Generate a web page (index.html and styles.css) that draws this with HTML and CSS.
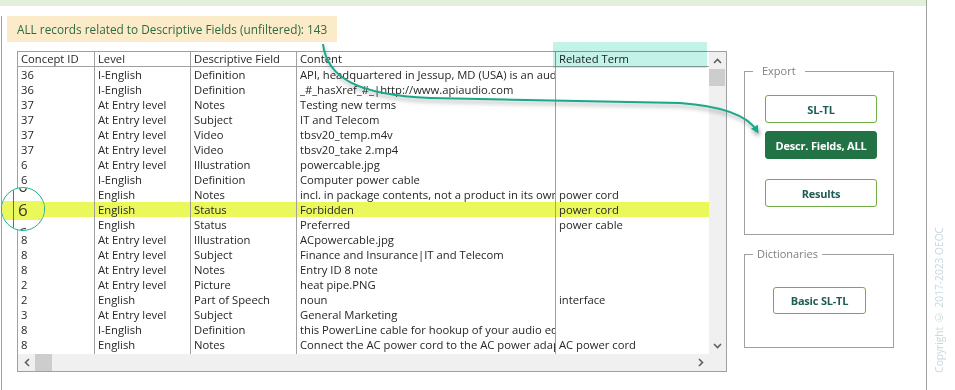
FILE: index.html
```html
<!DOCTYPE html>
<html>
<head>
<meta charset="UTF-8">
<title>Export</title>
<link rel="stylesheet" href="styles.css">
</head>
<body>
    <div id="screen">
        <div id="window">
            <div id="topbar"></div>
            <div id="form">
                <div id="banner">ALL records related to Descriptive Fields (unfiltered): 143</div>
                <div id="workarea">
                    <div id="listbox">
                        <div id="grid">
                            <div class="row head">
                                <div class="cell">Concept ID</div>
                                <div class="cell">Level</div>
                                <div class="cell">Descriptive Field</div>
                                <div class="cell">Content</div>
                                <div class="cell">Related Term</div>
                            </div>
                            <div class="row"><div class="cell">36</div><div class="cell">I-English</div><div class="cell">Definition</div><div class="cell">API, headquartered in Jessup, MD (USA) is an audio company</div><div class="cell"></div></div>
                            <div class="row"><div class="cell">36</div><div class="cell">I-English</div><div class="cell">Definition</div><div class="cell">_#_hasXref_#_|http://www.apiaudio.com</div><div class="cell"></div></div>
                            <div class="row"><div class="cell">37</div><div class="cell">At Entry level</div><div class="cell">Notes</div><div class="cell">Testing new terms</div><div class="cell"></div></div>
                            <div class="row"><div class="cell">37</div><div class="cell">At Entry level</div><div class="cell">Subject</div><div class="cell">IT and Telecom</div><div class="cell"></div></div>
                            <div class="row"><div class="cell">37</div><div class="cell">At Entry level</div><div class="cell">Video</div><div class="cell">tbsv20_temp.m4v</div><div class="cell"></div></div>
                            <div class="row"><div class="cell">37</div><div class="cell">At Entry level</div><div class="cell">Video</div><div class="cell">tbsv20_take 2.mp4</div><div class="cell"></div></div>
                            <div class="row"><div class="cell">6</div><div class="cell">At Entry level</div><div class="cell">Illustration</div><div class="cell">powercable.jpg</div><div class="cell"></div></div>
                            <div class="row"><div class="cell">6</div><div class="cell">I-English</div><div class="cell">Definition</div><div class="cell">Computer power cable</div><div class="cell"></div></div>
                            <div class="row"><div class="cell">6</div><div class="cell">English</div><div class="cell">Notes</div><div class="cell">incl. in package contents, not a product in its own right</div><div class="cell">power cord</div></div>
                            <div class="row selected"><div class="cell">6</div><div class="cell">English</div><div class="cell">Status</div><div class="cell">Forbidden</div><div class="cell">power cord</div></div>
                            <div class="row"><div class="cell">6</div><div class="cell">English</div><div class="cell">Status</div><div class="cell">Preferred</div><div class="cell">power cable</div></div>
                            <div class="row"><div class="cell">8</div><div class="cell">At Entry level</div><div class="cell">Illustration</div><div class="cell">ACpowercable.jpg</div><div class="cell"></div></div>
                            <div class="row"><div class="cell">8</div><div class="cell">At Entry level</div><div class="cell">Subject</div><div class="cell">Finance and Insurance|IT and Telecom</div><div class="cell"></div></div>
                            <div class="row"><div class="cell">8</div><div class="cell">At Entry level</div><div class="cell">Notes</div><div class="cell">Entry ID 8 note</div><div class="cell"></div></div>
                            <div class="row"><div class="cell">2</div><div class="cell">At Entry level</div><div class="cell">Picture</div><div class="cell">heat pipe.PNG</div><div class="cell"></div></div>
                            <div class="row"><div class="cell">2</div><div class="cell">English</div><div class="cell">Part of Speech</div><div class="cell">noun</div><div class="cell">interface</div></div>
                            <div class="row"><div class="cell">3</div><div class="cell">At Entry level</div><div class="cell">Subject</div><div class="cell">General Marketing</div><div class="cell"></div></div>
                            <div class="row"><div class="cell">8</div><div class="cell">I-English</div><div class="cell">Definition</div><div class="cell">this PowerLine cable for hookup of your audio equipment</div><div class="cell"></div></div>
                            <div class="row"><div class="cell">8</div><div class="cell">English</div><div class="cell">Notes</div><div class="cell">Connect the AC power cord to the AC power adapter</div><div class="cell">AC power cord</div></div>
                            <div class="row filler"><div class="cell"></div><div class="cell"></div><div class="cell"></div><div class="cell"></div><div class="cell"></div></div>
                        </div>
                        <div id="vscroll">
                            <div class="sbtn"><svg width="9" height="6" viewBox="0 0 9 6"><polyline points="1,5 4.5,1.5 8,5" fill="none" stroke="#606060" stroke-width="1.6"/></svg></div>
                            <div class="vthumb"></div>
                            <div class="spacer"></div>
                            <div class="sbtn"><svg width="9" height="6" viewBox="0 0 9 6"><polyline points="1,1 4.5,4.5 8,1" fill="none" stroke="#606060" stroke-width="1.6"/></svg></div>
                        </div>
                        <div id="hscroll">
                            <div class="sbtn"><svg width="6" height="9" viewBox="0 0 6 9"><polyline points="5,1 1.5,4.5 5,8" fill="none" stroke="#606060" stroke-width="1.6"/></svg></div>
                            <div class="hthumb"></div>
                            <div class="spacer"></div>
                            <div class="sbtn"><svg width="6" height="9" viewBox="0 0 6 9"><polyline points="1,1 4.5,4.5 1,8" fill="none" stroke="#606060" stroke-width="1.6"/></svg></div>
                        </div>
                        <div id="corner"></div>
                    </div>
                    <div id="side">
                        <fieldset id="export">
                            <legend>Export</legend>
                            <div class="buttons">
                                <button class="btn">SL-TL</button>
                                <button class="btn active">Descr. Fields, ALL</button>
                                <button class="btn results">Results</button>
                            </div>
                        </fieldset>
                        <fieldset id="dictionaries">
                            <legend>Dictionaries</legend>
                            <div class="buttons">
                                <button class="btn small">Basic SL-TL</button>
                            </div>
                        </fieldset>
                    </div>
                </div>
            </div>
        </div>
        <div id="copyright"><span>Copyright © 2017-2023 OEOC</span></div>
    </div>

    <!-- annotations drawn over the screenshot -->
    <div id="col-mark"></div>
    <div id="magnifier">
        <div class="mag-band"></div>
        <div class="mag-line"></div>
        <span class="mag-six top">6</span>
        <span class="mag-six">6</span>
        <span class="mag-six bottom">6</span>
    </div>
    <svg id="arrow" width="955" height="390" viewBox="0 0 955 390">
        <defs>
            <marker id="head" markerWidth="8" markerHeight="8" refX="5" refY="4" orient="auto" markerUnits="userSpaceOnUse">
                <path d="M0,0 L8,4 L0,8 Z" fill="#19a88b"/>
            </marker>
        </defs>
        <path d="M323,44 C327,78 358,95 430,98 L680,103 C722,106 748,116 757,131" fill="none" stroke="#19a88b" stroke-width="2" marker-end="url(#head)"/>
    </svg>
</body>
</html>
```
FILE: styles.css
```css
* {
margin: 0;
padding: 0;
box-sizing: border-box;
}

html, body {
width: 955px;
height: 390px;
overflow: hidden;
background-color: #ffffff;
font-family: 'Open Sans', 'Noto Sans', sans-serif;
}

body {
position: relative;
}

#screen {
display: flex;
height: 390px;
}

#window {
width: 927px;
height: 390px;
border-right: 1px solid #a0a0a0;
}

#topbar {
height: 6px;
background-color: #e2efda;
}

#form {
margin-left: 1px;
height: 383px;
border-left: 1px solid #a0a0a0;
border-bottom: 1px solid #a0a0a0;
}

#banner {
width: 330px;
height: 26px;
margin: 10px 0 0 5px;
padding-left: 10px;
line-height: 26px;
font-size: 11.8px;
color: #2d6a40;
background-color: #fcebc9;
}

#workarea {
display: flex;
margin-top: 9px;
padding-left: 15px;
}

#listbox {
width: 710px;
height: 321px;
border: 1px solid #a0a0a0;
display: grid;
grid-template-columns: 691px 17px;
grid-template-rows: 302px 17px;
font-size: 11.25px;
color: #262626;
}

#grid {
overflow: hidden;
}

.row {
display: grid;
grid-template-columns: 76px 96px 106px 259px 154px;
height: 15px;
line-height: 15px;
}

.row.head {
border-bottom: 1px solid #a0a0a0;
line-height: 14px;
}

.row.selected {
background-color: #ebf85c;
}

.row.filler {
height: 2px;
}

.cell {
padding-left: 3px;
white-space: nowrap;
overflow: hidden;
}

.cell + .cell {
border-left: 1px solid #a0a0a0;
}

#vscroll {
grid-row: 1;
grid-column: 2;
display: flex;
flex-direction: column;
background-color: #f0f0f0;
}

#hscroll {
grid-row: 2;
grid-column: 1;
display: flex;
background-color: #f0f0f0;
}

#corner {
background-color: #f0f0f0;
}

.sbtn {
width: 17px;
height: 17px;
display: flex;
align-items: center;
justify-content: center;
flex-shrink: 0;
}

.sbtn svg {
display: block;
}

.spacer {
flex: 1;
}

.vthumb {
height: 17px;
margin: 0 1px 0 0;
background-color: #cdcdcd;
}

.hthumb {
width: 17px;
background-color: #cdcdcd;
}

#side {
margin: 13px 0 0 17px;
width: 150px;
}

fieldset {
border: 1px solid #a0a0a0;
padding: 0;
}

legend {
margin-left: 8px;
line-height: 14px;
font-size: 11px;
color: #7f7f7f;
}

.buttons {
display: flex;
flex-direction: column;
align-items: flex-start;
}

#export {
height: 171px;
}

#export legend {
padding: 0 9px;
}

#export .buttons {
padding: 17px 0 0 20px;
}

#dictionaries {
height: 101px;
margin-top: 12px;
}

#dictionaries legend {
padding: 0 4px;
}

#dictionaries .buttons {
padding: 26px 0 0 28px;
}

.btn {
width: 112px;
height: 28px;
border: 1px solid #70ad47;
border-radius: 3px;
background-color: #ffffff;
color: #1f5c52;
font-family: 'Open Sans', sans-serif;
font-size: 11px;
font-weight: 700;
letter-spacing: -0.2px;
}

.btn.active {
margin-top: 8px;
background-color: #217346;
border-color: #217346;
color: #ffffff;
}

.btn.results {
margin-top: 20px;
}

.btn.small {
width: 93px;
height: 27px;
}

#copyright {
flex: 1;
display: flex;
flex-direction: column;
justify-content: flex-end;
align-items: center;
padding: 0 5px 17px 0;
}

#copyright span {
writing-mode: vertical-rl;
transform: rotate(180deg);
font-size: 10.2px;
color: #c6d9dc;
}

#col-mark {
position: absolute;
left: 553px;
top: 42px;
width: 154px;
height: 26px;
background-color: #c2f2e8;
mix-blend-mode: multiply;
}

#magnifier {
position: absolute;
left: 1px;
top: 187px;
width: 44px;
height: 44px;
border: 1.5px solid #1fae96;
border-radius: 50%;
background-color: #ffffff;
overflow: hidden;
}

.mag-band {
position: absolute;
left: 0;
right: 0;
top: 13px;
height: 19px;
background-color: #ebf85c;
}

.mag-line {
position: absolute;
left: 11px;
top: 0;
bottom: 0;
width: 1px;
background-color: #6b6b5a;
}

.mag-six {
position: absolute;
left: 16px;
top: 11px;
font-size: 17px;
line-height: 22px;
color: #3a3a2a;
}

.mag-six.top {
top: -13px;
}

.mag-six.bottom {
top: 35px;
}

#arrow {
position: absolute;
left: 0;
top: 0;
pointer-events: none;
filter: drop-shadow(1px 3px 2px rgba(0, 0, 0, 0.35));
}
```
